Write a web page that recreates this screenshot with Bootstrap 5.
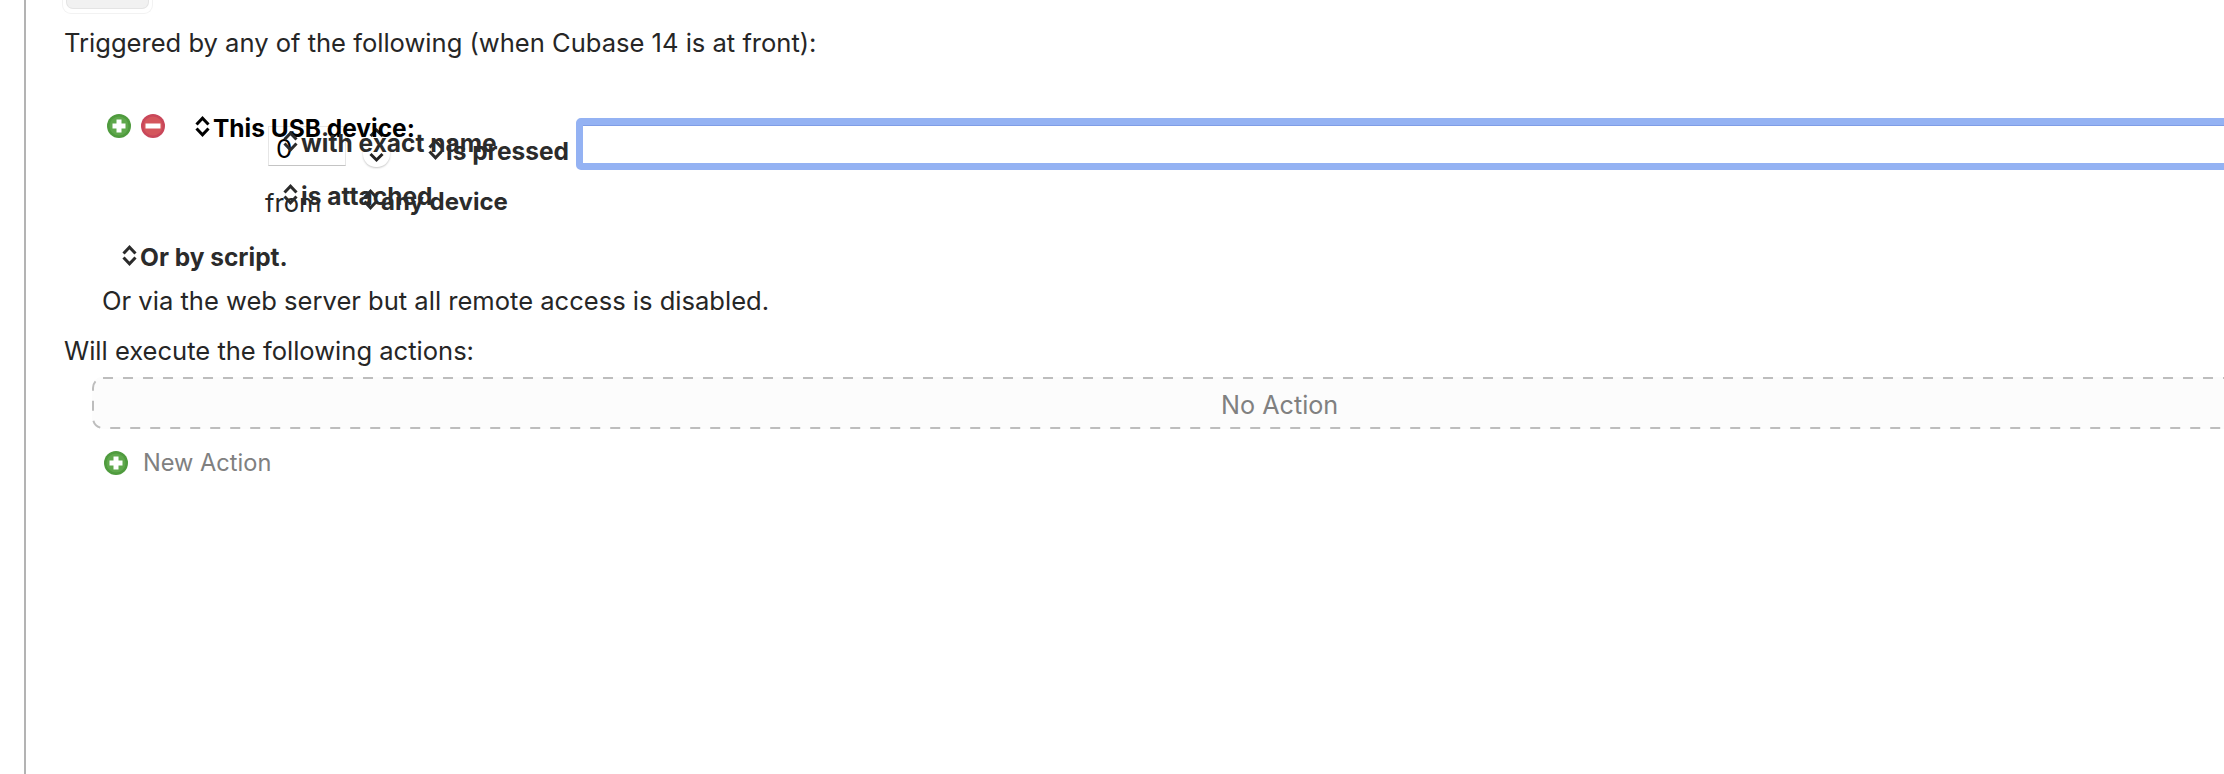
<!DOCTYPE html>
<html lang="en">
<head>
    <meta charset="UTF-8">
    <title>Cubase 14 macro triggers</title>
    <link rel="stylesheet" href="https://cdn.jsdelivr.net/npm/bootstrap@5.3.0/dist/css/bootstrap.min.css">
    <style>
        html, body { height: 774px; overflow: hidden; background: #fff; }
        body { font-family: Inter, "Liberation Sans", sans-serif; font-size: 25.55px; line-height: 30px; color: #262626; }
        .rail { width: 2px; margin-left: 24px; background: #b3b3b3; flex: none; }
        .pane { padding-left: 38px; min-width: 0; flex: 1; overflow: hidden; }

        .stub-btn { width: 91px; height: 14px; margin-left: -2px; border: 1px solid #f2f2f2; border-top: 0; border-radius: 0 0 9px 9px; padding: 0 3px; }
        .stub-fill { height: 9px; background: #f1f1f1; border: 1px solid #e4e4e4; border-top: 0; border-radius: 0 0 7px 7px; }
        .trigger-head { margin-top: 14px; }

        .trigger-area { position: relative; height: 142px; margin-top: 42px; }
        .floater { position: absolute; white-space: nowrap; }
        .pop-label { font-size: 24.5px; font-weight: 700; color: #2b2b2b; }
        .pop-label svg { margin-right: 3px; }
        .chevrons { width: 15px; height: 21px; vertical-align: baseline; fill: none; stroke: currentColor; stroke-width: 3; }

        .pos-plus { left: 43px; top: 14px; }
        .pos-minus { left: 77px; top: 14px; }
        .pos-device { left: 131px; top: 13px; color: #000; }
        .pos-number { left: 204px; top: 26px; }
        .pos-stepper { left: 299px; top: 27px; }
        .pos-exact { left: 219px; top: 28px; }
        .pos-pressed { left: 364px; top: 36px; }
        .pos-attached { left: 219px; top: 81px; }
        .pos-from { left: 201px; top: 88px; }
        .pos-any { left: 299px; top: 87px; font-size: 24px; }
        .pos-field { left: 512px; top: 18px; }

        .round-icon { display: block; width: 24px; height: 24px; }
        .number-field.form-control { width: 78px; height: 40px; padding: 8px 7px 4px; font: inherit; font-size: 26px; color: #000; border: 1px solid #e6e6e6; border-bottom-color: #c4c4c4; border-radius: 0; background: #fff; }
        .stepper-btn { width: 27px; height: 40px; background: #fff; border-radius: 13px; box-shadow: 0 1px 2px rgba(0, 0, 0, .22); }
        .stepper-btn svg { display: block; margin: 0 auto; width: 15px; height: 36px; fill: none; stroke: #222; stroke-width: 3; }
        .name-field.form-control { width: 1800px; height: 52px; border: 7px solid #94b2f3; border-radius: 5px; box-shadow: inset 0 1px 0 #7f9de6; background: #fff; padding: 0; }

        .script-row { margin-left: 58px; }
        .via-row { margin-left: 38px; margin-top: 14px; }
        .actions-head { margin-top: 20px; }

        .empty-box { position: relative; width: 2300px; height: 52px; margin-left: 28px; margin-top: 11px; background: #fcfcfc; border-radius: 10px; }
        .empty-outline { position: absolute; inset: 0; width: 100%; height: 100%; fill: none; stroke: #bdbdbd; stroke-width: 2; stroke-dasharray: 10 10; }
        .empty-text { position: absolute; left: 1129px; top: 13px; font-size: 25.2px; color: #808080; }
        .new-action { margin-left: 40px; margin-top: 19px; gap: 15px; font-size: 23.6px; color: #808080; }
    </style>
</head>
<body class="d-flex">

    <svg class="d-none">
        <symbol id="ic-updown" viewBox="0 0 15 21">
            <path d="M1.5 8.5 7.5 2.2l6 6.3M1.5 12.5l6 6.3 6-6.3"/>
        </symbol>
        <symbol id="ic-stepper" viewBox="0 0 15 36">
            <path d="M1.5 9 7.5 3l6 6M1.5 27l6 6 6-6"/>
        </symbol>
        <symbol id="ic-plus" viewBox="0 0 24 24">
            <circle cx="12" cy="12" r="12" fill="#4f9b3e"/>
            <circle cx="12" cy="12" r="9.5" fill="#5fa84c"/>
            <path d="M9.5 5.5h5v4h4v5h-4v4h-5v-4h-4v-5h4z" fill="#fff"/>
        </symbol>
        <symbol id="ic-minus" viewBox="0 0 24 24">
            <circle cx="12" cy="12" r="12" fill="#c9475a"/>
            <circle cx="12" cy="12" r="9.5" fill="#d4565c"/>
            <rect x="4.5" y="9.5" width="15" height="5" fill="#fff"/>
        </symbol>
    </svg>

    <div class="rail"></div>

    <div class="pane">
        <div class="stub-btn"><div class="stub-fill"></div></div>

        <div class="trigger-head">Triggered by any of the following (when Cubase 14 is at front):</div>

        <div class="trigger-area">
            <svg class="floater pos-plus round-icon"><use href="#ic-plus"/></svg>
            <svg class="floater pos-minus round-icon"><use href="#ic-minus"/></svg>

            <div class="floater pos-number"><input class="form-control number-field" type="text" value="0"></div>
            <div class="floater pos-stepper stepper-btn"><svg><use href="#ic-stepper"/></svg></div>
            <div class="floater pos-device pop-label"><svg class="chevrons"><use href="#ic-updown"/></svg>This USB device:</div>
            <div class="floater pos-exact pop-label"><svg class="chevrons"><use href="#ic-updown"/></svg>with exact name</div>
            <div class="floater pos-pressed pop-label"><svg class="chevrons"><use href="#ic-updown"/></svg>is pressed</div>
            <div class="floater pos-field"><input class="form-control name-field" type="text"></div>

            <div class="floater pos-from">from</div>
            <div class="floater pos-attached pop-label"><svg class="chevrons"><use href="#ic-updown"/></svg>is attached</div>
            <div class="floater pos-any pop-label"><svg class="chevrons"><use href="#ic-updown"/></svg>any device</div>
        </div>

        <div class="script-row pop-label"><svg class="chevrons"><use href="#ic-updown"/></svg>Or by script.</div>
        <div class="via-row">Or via the web server but all remote access is disabled.</div>
        <div class="actions-head">Will execute the following actions:</div>

        <div class="empty-box">
            <svg class="empty-outline"><rect x="1" y="1" width="2298" height="50" rx="10"/></svg>
            <span class="empty-text">No Action</span>
        </div>

        <div class="new-action d-flex align-items-center">
            <svg class="round-icon"><use href="#ic-plus"/></svg>
            <span>New Action</span>
        </div>
    </div>

    <script src="https://cdn.jsdelivr.net/npm/bootstrap@5.3.0/dist/js/bootstrap.bundle.min.js"></script>
</body>
</html>
